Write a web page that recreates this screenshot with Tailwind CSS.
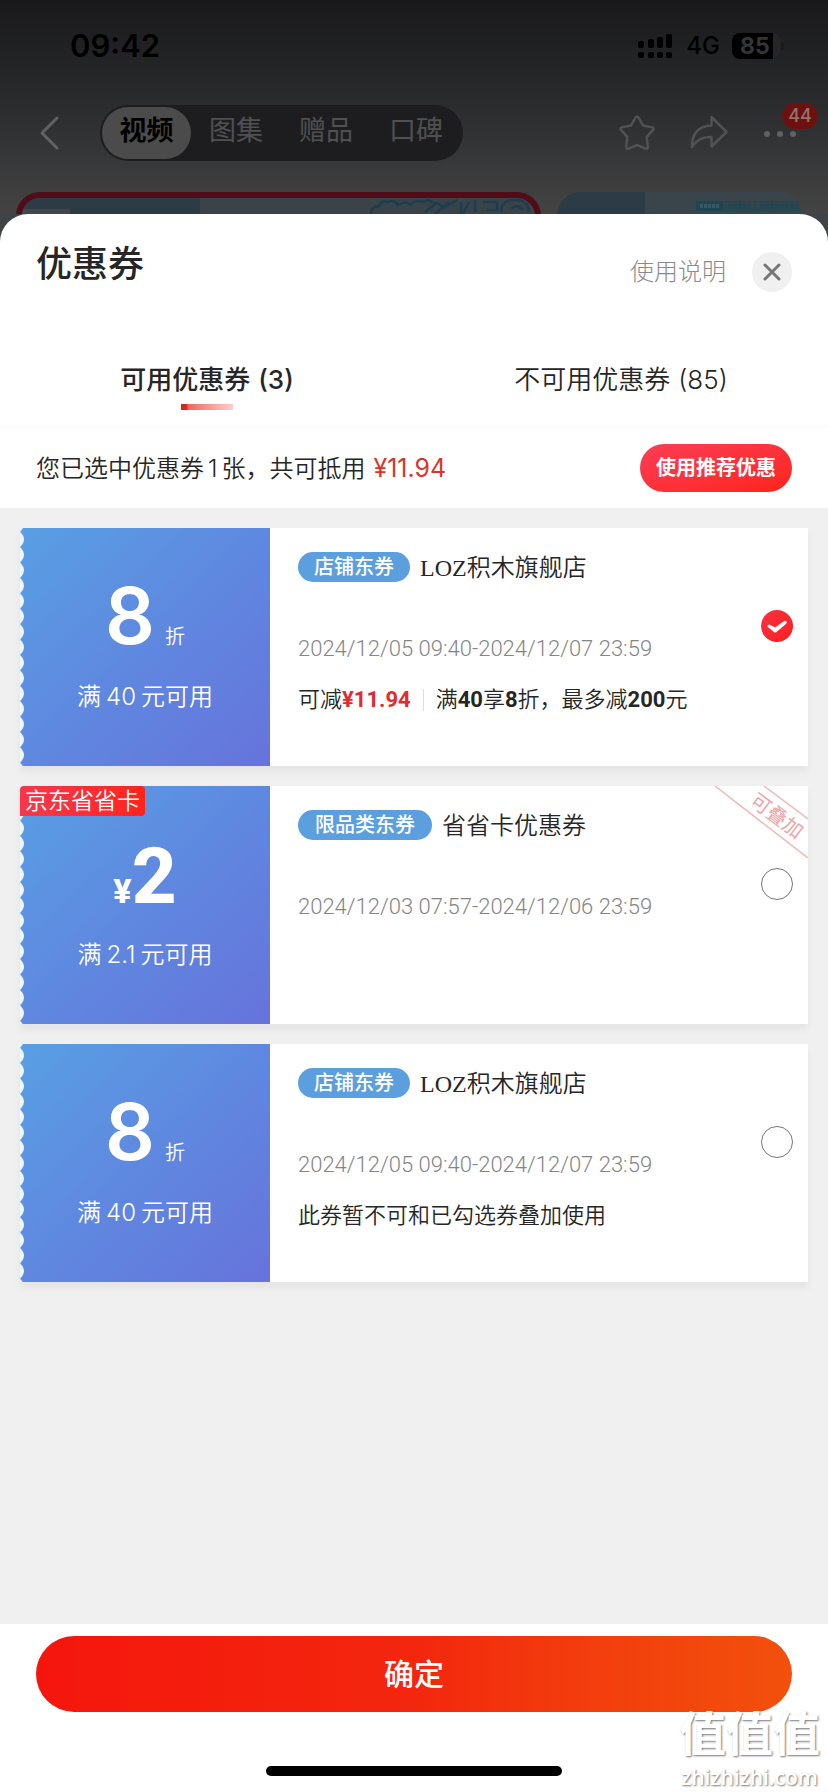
<!DOCTYPE html>
<html lang="zh-CN">
<head>
<meta charset="utf-8">
<meta name="viewport" content="width=device-width, initial-scale=1">
<title>优惠券</title>
<script src="https://cdn.jsdelivr.net/npm/@tailwindcss/browser@4"></script>
</head>
<body class="flex min-h-screen flex-col bg-[#414446] font-['Inter','Noto_Sans_CJK_SC',sans-serif] text-[#262626]">

<!-- Dimmed product page behind the sheet -->
<div class="flex h-[214px] flex-col overflow-hidden bg-linear-to-b from-[#19191b] via-[#2b2c2e] to-[#444444]">
  <div class="flex h-[92px] shrink-0 items-center justify-between pr-[44px] pl-[70px]">
    <span class="text-[31px] leading-[40px] font-semibold text-black">09:42</span>
    <div class="flex items-center gap-3">
      <svg class="h-[26px] w-[36px]" viewBox="0 0 36 26" fill="#000">
        <rect x="0" y="8" width="6" height="7" rx="2"/><rect x="10" y="6" width="6" height="9" rx="2"/><rect x="19" y="4" width="6" height="11" rx="2"/><rect x="28" y="1" width="6" height="14" rx="2"/>
        <rect x="0" y="19" width="6" height="6" rx="2"/><rect x="10" y="19" width="6" height="6" rx="2"/><rect x="19" y="19" width="6" height="6" rx="2"/><rect x="28" y="19" width="6" height="6" rx="2"/>
      </svg>
      <span class="text-[24px] leading-[28px] font-medium text-black">4G</span>
      <div class="flex items-center gap-px">
        <div class="flex h-[26px] w-[48px] items-center rounded-lg bg-linear-to-r from-black from-85% to-[#262628] to-85% pl-[8px]">
          <span class="text-[23px] leading-[26px] font-bold text-[#353538]">85</span>
        </div>
        <div class="h-[8px] w-[3px] rounded-r bg-[#1c1c1e]"></div>
      </div>
    </div>
  </div>
  <div class="flex h-[82px] shrink-0 items-center justify-between pr-[10px] pl-[38px]">
    <div class="flex items-center gap-[38px]">
      <button class="flex" aria-label="返回">
        <svg class="h-[36px] w-[24px]" viewBox="0 0 24 36" fill="none" stroke="#5f6163" stroke-width="3" stroke-linecap="round" stroke-linejoin="round"><path d="M19 3 4 18l15 15"/></svg>
      </button>
      <nav class="flex h-[56px] items-center rounded-full bg-[#1d1d1f] p-[2px] text-[27px] leading-[36px] text-[#505050]">
        <button class="h-[52px] w-[89px] rounded-full bg-[#4b4b4b] pb-1 font-bold text-black">视频</button>
        <button class="h-[52px] w-[90px] pb-1">图集</button>
        <button class="h-[52px] w-[90px] pb-1">赠品</button>
        <button class="h-[52px] w-[90px] pb-1">口碑</button>
      </nav>
    </div>
    <div class="flex items-center gap-[34px]">
      <button class="flex" aria-label="收藏">
        <svg class="h-[38px] w-[38px]" viewBox="0 0 38 38" fill="none" stroke="#505254" stroke-width="2.5" stroke-linejoin="round"><path d="M17.500 3.500q1.500-2 3 0l4.500 8 9.200 1.900q2.300.6.800 2.500l-6.200 7 .9 9.800q.1 2.600-2.200 1.900L19 31l-8.500 3.600q-2.300.7-2.200-1.900l.9-9.800-6.200-7q-1.500-1.900.8-2.500l9.200-1.900z"/></svg>
      </button>
      <button class="flex" aria-label="分享">
        <svg class="h-[38px] w-[38px]" viewBox="0 0 38 38" fill="none" stroke="#505254" stroke-width="2.500" stroke-linejoin="round"><path d="M21.500 3 36.500 18 21.500 32.500V23C13 22.500 7 25.500 2 33 1.500 20 8.500 12 21.500 11.500z"/></svg>
      </button>
      <button class="relative flex w-[56px]" aria-label="更多">
        <svg class="h-[38px] w-[38px]" viewBox="0 0 38 38" fill="#5f6163"><circle cx="5" cy="20" r="3"/><circle cx="18" cy="20" r="3"/><circle cx="31" cy="20" r="3"/></svg>
        <span class="absolute -top-[11px] right-0 h-[26px] w-[36px] rounded-full bg-[#6b120f] text-center text-[18px] leading-[26px] font-medium text-[#927371]">44</span>
      </button>
    </div>
  </div>
  <div class="flex shrink-0 gap-4 px-4 pt-[18px]">
    <div class="flex h-[60px] w-[525px] justify-between overflow-hidden rounded-t-[24px] border-6 border-[#500d19] bg-[#3a4348]">
      <div class="h-full w-[178px] bg-[#2d3b45] pt-[11px]"><div class="h-[20px] w-[48px] bg-[#43474b]"></div></div>
      <svg class="h-[40px] w-[170px]" viewBox="0 0 170 40" fill="none" stroke="#1d3d50" stroke-width="2.500">
        <path d="M6 16q0-8 8-8 2-6 9-4 7-3 10 3 8-5 13 0 4-6 12-3 6-4 10 1 8 0 10 5L92 2M60 14l10-8M70 16l14-12M96 4v12M104 4l-6 12M110 2v12M118 4h14v8h-10M136 14q0-12 14-12t14 12M146 10q8-4 12 2"/>
      </svg>
    </div>
    <div class="flex h-[60px] w-[246px] items-start justify-between overflow-hidden rounded-t-[24px] bg-[#39454b] pr-[4px]">
      <div class="h-full w-[88px] bg-[#2d3b46]"></div>
      <svg class="mt-[9px] h-[10px] w-[103px]" viewBox="0 0 103 10"><rect x=".5" y=".5" width="102" height="9" fill="#34444b" stroke="#1f4855"/><rect width="27" height="10" fill="#1c4654"/><path d="M4 5h20" stroke="#3a5862" stroke-width="4" stroke-dasharray="3 1"/><path d="M32 5h22M64 5h36" stroke="#1f4855" stroke-width="5" stroke-dasharray="4 1"/><path d="M59 0v10" stroke="#1f4855"/></svg>
    </div>
  </div>
</div>

<main class="flex grow flex-col overflow-hidden rounded-t-[28px] bg-white">
  <header class="flex h-[116px] justify-between px-[36px]">
    <h1 class="pt-[25px] text-[36px] leading-[50px] font-medium">优惠券</h1>
    <div class="flex h-[116px] items-center gap-[26px]">
      <a href="#" class="text-[24px] leading-[32px] font-light text-[#8a8a8a]">使用说明</a>
      <button class="flex size-[40px] items-center justify-center rounded-full bg-[#f0f0f0]" aria-label="关闭">
        <svg class="size-[18px]" viewBox="0 0 18 18" fill="none" stroke="#777" stroke-width="3" stroke-linecap="round"><path d="M2 2l14 14M16 2 2 16"/></svg>
      </button>
    </div>
  </header>

  <div class="grid h-[98px] grid-cols-2 border-b border-[#f8f8f8] text-[26px] leading-[36px]" role="tablist">
    <button class="flex flex-col items-center pt-[32px] font-medium" role="tab" aria-selected="true">
      <span>可用优惠券<span class="ml-2">(3)</span></span>
      <span class="mt-[6px] h-[6px] w-[52px] bg-linear-to-r from-[#d22a18] from-10% via-[#ea6a60] via-15% to-[#f9cfcb]"></span>
    </button>
    <button class="flex flex-col items-center pt-[32px] font-[350]" role="tab" aria-selected="false">
      <span>不可用优惠券<span class="ml-2">(85)</span></span>
    </button>
  </div>

  <div class="flex h-[80px] items-center justify-between px-[36px]">
    <p class="text-[24px] leading-[32px] font-[350]">您已选中优惠券<span class="mx-1">1</span>张，共可抵用<span class="ml-2 text-[25px] font-normal text-[#d9362b]">¥11.94</span></p>
    <button class="h-[48px] rounded-full bg-linear-to-br from-[#fb3d53] to-[#fe2315] px-4 text-[20px] leading-[28px] font-bold text-white">使用推荐优惠</button>
  </div>

  <section class="relative flex grow flex-col gap-5 bg-[#f0f0f0] p-5">
    <svg class="absolute size-0" aria-hidden="true"><defs><pattern id="teeth" width="5" height="15.4" y="3.700" patternUnits="userSpaceOnUse"><path d="M0 0Q8 7.700 0 15.400z" fill="#eef7fd"/></pattern></defs></svg>

    <article class="relative flex h-[238px] bg-white shadow-[0_6px_8px_rgba(0,0,0,0.05)]">
      <svg class="absolute top-0 left-0 z-10 h-full w-[5px]"><rect width="5" height="100%" fill="url(#teeth)"/></svg>
      <div class="flex w-[250px] flex-col items-center bg-linear-to-br from-[#589fe3] via-[#5f88e0] to-[#6673db] pt-[48px] text-white">
        <div class="flex items-baseline gap-[10px]"><span class="text-[78px] leading-[80px] font-semibold">8</span><span class="text-[20px] leading-[28px] font-[350]">折</span></div>
        <p class="mt-[25px] text-[24px] leading-[32px] font-[350]">满<span class="mx-[5px]">40</span>元可用</p>
      </div>
      <div class="flex grow flex-col pt-6 pl-7">
        <div class="flex h-[30px] items-center gap-[10px]">
          <span class="rounded-full bg-[#5b9fdf] px-4 text-[20px] leading-[30px] font-medium text-white">店铺东券</span>
          <h2 class="pt-px font-['Liberation_Serif','Noto_Sans_CJK_SC',sans-serif] text-[24px] leading-[32px] font-[350]">LOZ积木旗舰店</h2>
        </div>
        <p class="mt-[53px] font-['Roboto'] text-[22px] leading-[28px] font-light text-[#858585]">2024/12/05 09:40-2024/12/07 23:59</p>
        <p class="mt-[23px] flex items-center font-['Roboto','Noto_Sans_CJK_SC',sans-serif] text-[22px] leading-[28px] font-[350]">
          <span>可减<b class="text-[#e22a2f]">¥11.94</b></span><span class="mx-[12px] h-[22px] w-px bg-[#ddd]"></span><span>满<b>40</b>享<b>8</b>折，最多减<b>200</b>元</span>
        </p>
      </div>
      <label class="relative mt-[82px] mr-[15px] size-[32px]">
        <input type="checkbox" checked class="peer block size-[32px] appearance-none rounded-full border border-[#777] checked:border-0 checked:bg-linear-to-br checked:from-[#fb3040] checked:to-[#f91f1b]" aria-label="选择此券">
        <svg class="absolute top-0 left-0 hidden size-[32px] peer-checked:block" viewBox="0 0 32 32" fill="#fff"><path d="M6.800 15.200q1.200-1 2.500-.3l4.700 2.600 9.200-6.500q1.300-.7 2.300.5.700 1.200-.3 2.200L15.600 22q-1.400 1.200-2.700-.1l-6-4.800q-1-1-.1-1.900z"/></svg>
      </label>
    </article>

    <article class="relative flex h-[238px] bg-white shadow-[0_6px_8px_rgba(0,0,0,0.05)]">
      <svg class="absolute top-0 left-0 z-10 h-full w-[5px]"><rect width="5" height="100%" fill="url(#teeth)"/></svg>
      <span class="absolute top-0 left-0 z-20 rounded-t rounded-br bg-linear-to-r from-[#f8374b] to-[#fe2417] px-[5px] text-[23px] leading-[30px] font-[350] text-white">京东省省卡</span>
      <div class="flex w-[250px] flex-col items-center bg-linear-to-br from-[#589fe3] via-[#5f88e0] to-[#6673db] pt-[51px] text-white">
        <div class="flex items-baseline font-['Roboto'] font-extrabold"><span class="text-[34px] leading-[40px]">¥</span><span class="text-[78px] leading-[80px]">2</span></div>
        <p class="mt-[22px] text-[24px] leading-[32px] font-[350]">满<span class="mx-[5px]">2.1</span>元可用</p>
      </div>
      <div class="flex grow flex-col pt-6 pl-7">
        <div class="flex h-[30px] items-center gap-[10px]">
          <span class="rounded-full bg-[#5b9fdf] px-[17px] text-[20px] leading-[30px] font-medium text-white">限品类东券</span>
          <h2 class="pt-px text-[24px] leading-[32px] font-[350]">省省卡优惠券</h2>
        </div>
        <p class="mt-[53px] font-['Roboto'] text-[22px] leading-[28px] font-light text-[#858585]">2024/12/03 07:57-2024/12/06 23:59</p>
      </div>
      <svg class="absolute top-0 right-0 h-[72px] w-[94px]" viewBox="0 0 94 72"><path d="M1 0l93 72M50 0l44 33" stroke="#f3b6b9" stroke-width="1.500"/><text x="63" y="30" transform="rotate(37 63 30)" text-anchor="middle" dominant-baseline="central" fill="#f0a3a6" font-size="20">可叠加</text></svg>
      <label class="relative mt-[82px] mr-[15px] size-[32px]">
        <input type="checkbox" class="block size-[32px] appearance-none rounded-full border border-[#777]" aria-label="选择此券">
      </label>
    </article>

    <article class="relative flex h-[238px] bg-white shadow-[0_6px_8px_rgba(0,0,0,0.05)]">
      <svg class="absolute top-0 left-0 z-10 h-full w-[5px]"><rect width="5" height="100%" fill="url(#teeth)"/></svg>
      <div class="flex w-[250px] flex-col items-center bg-linear-to-br from-[#589fe3] via-[#5f88e0] to-[#6673db] pt-[48px] text-white">
        <div class="flex items-baseline gap-[10px]"><span class="text-[78px] leading-[80px] font-semibold">8</span><span class="text-[20px] leading-[28px] font-[350]">折</span></div>
        <p class="mt-[25px] text-[24px] leading-[32px] font-[350]">满<span class="mx-[5px]">40</span>元可用</p>
      </div>
      <div class="flex grow flex-col pt-6 pl-7">
        <div class="flex h-[30px] items-center gap-[10px]">
          <span class="rounded-full bg-[#5b9fdf] px-4 text-[20px] leading-[30px] font-medium text-white">店铺东券</span>
          <h2 class="pt-px font-['Liberation_Serif','Noto_Sans_CJK_SC',sans-serif] text-[24px] leading-[32px] font-[350]">LOZ积木旗舰店</h2>
        </div>
        <p class="mt-[53px] font-['Roboto'] text-[22px] leading-[28px] font-light text-[#858585]">2024/12/05 09:40-2024/12/07 23:59</p>
        <p class="mt-[23px] font-['Roboto','Noto_Sans_CJK_SC',sans-serif] text-[22px] leading-[28px] font-[350]">此券暂不可和已勾选券叠加使用</p>
      </div>
      <label class="relative mt-[82px] mr-[15px] size-[32px]">
        <input type="checkbox" class="block size-[32px] appearance-none rounded-full border border-[#777]" aria-label="选择此券">
      </label>
    </article>
  </section>

  <footer class="relative flex h-[168px] flex-col items-center justify-between bg-white px-[36px] pt-3 pb-4">
    <button class="h-[76px] w-full rounded-full bg-linear-to-r from-[#f5150c] via-[#f3260e] to-[#f2500c] text-[30px] leading-[40px] font-medium text-white">确定</button>
    <div class="h-[10px] w-[296px] rounded-full bg-black"></div>
    <div class="absolute right-[8px] bottom-0 flex flex-col items-center text-white [text-shadow:1px_1px_2px_#777]">
      <span class="text-[47px] leading-[57px] font-bold">值值值</span>
      <span class="font-['Open_Sans'] text-[21px] leading-[30px] font-semibold">zhizhizhi.com</span>
    </div>
  </footer>
</main>
</body>
</html>
